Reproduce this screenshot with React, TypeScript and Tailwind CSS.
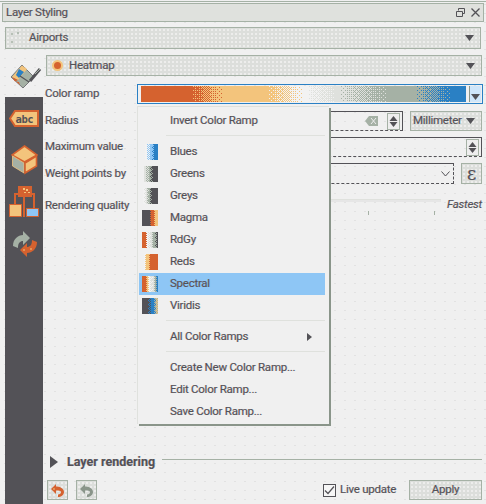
import type { ReactNode } from "react";

const font = "font-['Roboto','Noto_Sans',sans-serif]";
const combo =
  "flex items-center border border-[#a5b1a5] bg-[#dcdedb] bg-[radial-gradient(circle,#eeeeee_0.7px,transparent_0.8px)] bg-[length:4px_4px]";
const input = "border border-[#535257] [border-bottom-style:dashed]";

const ORANGE = "#d5622f";
const TAN = "#f3c47c";
const LIGHT = "#dfe1dd";
const WHITE = "#f2f2f2";
const SAGE = "#a5b1a5";
const BLUE = "#2a80c4";
const SKY = "#8ec6f5";
const DARK = "#535257";

type Stop = [number, string];

const BAYER = [
  [0, 8, 2, 10],
  [12, 4, 14, 6],
  [3, 11, 1, 9],
  [15, 7, 13, 5],
];

function pick(stops: Stop[], t: number, x: number, y: number) {
  for (let i = 0; i < stops.length - 1; i++) {
    const [p0, c0] = stops[i];
    const [p1, c1] = stops[i + 1];
    if (t <= p1) {
      const f = p1 === p0 ? 1 : (t - p0) / (p1 - p0);
      return f * 16 > BAYER[y % 4][x % 4] + 0.5 ? c1 : c0;
    }
  }
  return stops[stops.length - 1][1];
}

// ordered dither, same look as the 256 colour screenshot
function Ramp({ w, h, stops, className }: { w: number; h: number; stops: Stop[]; className?: string }) {
  const rects: ReactNode[] = [];
  for (let y = 0; y < h; y++) {
    let start = 0;
    let cur = pick(stops, 0, 0, y);
    for (let x = 1; x <= w; x++) {
      const c = x < w ? pick(stops, x / w, x, y) : "";
      if (c !== cur) {
        rects.push(<rect key={`${x}-${y}`} x={start} y={y} width={x - start} height={1} fill={cur} />);
        start = x;
        cur = c;
      }
    }
  }
  return (
    <svg width={w} height={h} shapeRendering="crispEdges" className={className}>
      {rects}
    </svg>
  );
}

const mainRamp: Stop[] = [
  [0, ORANGE],
  [0.15, ORANGE],
  [0.252, TAN],
  [0.382, TAN],
  [0.505, WHITE],
  [0.6, LIGHT],
  [0.76, SAGE],
  [0.837, SAGE],
  [0.96, BLUE],
  [1, BLUE],
];

const swatches: { name: string; stops: Stop[]; w: number }[] = [
  { name: "Blues", w: 13, stops: [[0, WHITE], [0.45, SKY], [0.7, BLUE], [1, BLUE]] },
  { name: "Greens", w: 14, stops: [[0, LIGHT], [0.4, SAGE], [0.6, DARK], [1, DARK]] },
  { name: "Greys", w: 15, stops: [[0, WHITE], [0.2, LIGHT], [0.4, SAGE], [0.55, DARK], [1, DARK]] },
  { name: "Magma", w: 16, stops: [[0, DARK], [0.45, DARK], [0.55, ORANGE], [0.68, ORANGE], [0.8, TAN], [1, TAN]] },
  { name: "RdGy", w: 16, stops: [[0, ORANGE], [0.2, ORANGE], [0.3, WHITE], [0.55, LIGHT], [0.75, SAGE], [0.95, DARK], [1, DARK]] },
  { name: "Reds", w: 14, stops: [[0, WHITE], [0.15, TAN], [0.3, TAN], [0.42, ORANGE], [1, ORANGE]] },
  { name: "Spectral", w: 16, stops: [[0, ORANGE], [0.2, ORANGE], [0.32, TAN], [0.45, WHITE], [0.65, LIGHT], [0.8, SAGE], [1, BLUE]] },
  { name: "Viridis", w: 16, stops: [[0, DARK], [0.35, DARK], [0.55, BLUE], [0.72, BLUE], [0.85, SAGE], [1, TAN]] },
];

function Caret({ className = "" }: { className?: string }) {
  return (
    <svg width="9" height="6" viewBox="0 0 9 6" className={className}>
      <path d="M0 0h9L4.5 6z" fill="#535257" />
    </svg>
  );
}

function Spin() {
  return (
    <div className="flex h-[17px] w-[13px] flex-col justify-between border border-[#a5b1a5] bg-[#eeeeee] py-[2px]">
      <svg width="11" height="5" viewBox="0 0 11 5"><path d="M5.5 0l4 5h-8z" fill="#535257" /></svg>
      <svg width="11" height="5" viewBox="0 0 11 5"><path d="M1.5 0h8l-4 5z" fill="#535257" /></svg>
    </div>
  );
}

function Label({ children }: { children: ReactNode }) {
  return <div className="w-[94px] shrink-0 whitespace-nowrap pl-[2px]">{children}</div>;
}

function BrushIcon() {
  return (
    <svg width="34" height="28" viewBox="0 0 34 28">
      <path d="M13 2L2 14l12 11 11-11z" fill="#a5b1a5" stroke="#535257" strokeWidth="0.7" />
      <path d="M13 2.500L3 14l6 3 9-11z" fill="#f3c47c" />
      <path d="M10 6l5 3-5 6-3-3z" fill="#2a80c4" />
      <path d="M3 14l6 3-3 1.500z" fill="#d5622f" />
      <path d="M7 18.500l3 .500 1 3z" fill="#d5622f" />
      <path d="M11 13l9 6" stroke="#535257" strokeWidth="1.200" />
      <path d="M21 18L31 6" stroke="#535257" strokeWidth="3" />
      <path d="M26 11l5-5" stroke="#a5b1a5" strokeWidth="1" />
    </svg>
  );
}

function AbcIcon() {
  return (
    <svg width="30" height="18" viewBox="0 0 30 18">
      <path d="M6 1h23v15H6L1 8.500z" fill="#f3c47c" stroke="#d5622f" strokeWidth="2" />
      <text x="6.500" y="13" fontFamily="'DejaVu Sans Mono', monospace" fontWeight="700" fontSize="10.500" letterSpacing="-0.4" fill="#535257" style={{ textShadow: "none" }}>abc</text>
    </svg>
  );
}

function CubeIcon() {
  return (
    <svg width="27" height="30" viewBox="0 0 27 30">
      <path d="M13.500 1L26 10 13.500 17 1 10z" fill="#f3c47c" stroke="#d5622f" strokeWidth="1.600" />
      <path d="M1.500 11l11.500 7v10L1.500 21z" fill="#a5b1a5" stroke="#f3c47c" strokeWidth="0.8" />
      <path d="M25.500 11L14 18v10l11.500-7z" fill="#f3c47c" stroke="#d5622f" strokeWidth="1.600" />
    </svg>
  );
}

function TreeIcon() {
  return (
    <svg width="31" height="33" viewBox="0 0 31 33">
      <path d="M9 0h14v11H9z" fill="#d5622f" />
      <path d="M14 2h2v2h-2zM17 3h2v2h-2zM15 6h2v2h-2zM19 6h2v2h-2zM12 7h2v2h-2z" fill="#f3c47c" />
      <path d="M5 7h21v2H5zM5 7h2v13H5zM24 7h2v15h-2zM14 11h2v20h-2z" fill="#d5622f" />
      <path d="M.5 18.500h12v12H.5z" fill="#f3c47c" stroke="#d5622f" />
      <path d="M17.500 22.500h12v8h-12z" fill="#8ec6f5" stroke="#d5622f" />
    </svg>
  );
}

function UndoPair() {
  return (
    <svg width="26" height="28" viewBox="0 0 26 28">
      <path d="M1 16C1 9 6 5 11 5V1l7 7-7 7v-4C8 11 6 13 6 18z" fill="#a5b1a5" />
      <path d="M25 12c0 7-5 11-10 11v4l-7-7 7-7v4c3 0 5-2 5-7z" fill="#d5622f" />
      <path d="M11 20h2M18 19h2" stroke="#f3c47c" />
    </svg>
  );
}

function SmallUndo({ grey }: { grey?: boolean }) {
  const fill = grey ? "#8a958a" : "#d5622f";
  return (
    <svg width="13" height="13" viewBox="0 0 13 13">
      <path d="M0 5l5-5v2.500c4 0 8 2 8 5.500 0 3-3 5-6 5v-2.500c2 0 3-1 3-2.500S8 6.500 5 6.500V10z" fill={fill} />
      {!grey && <path d="M2 5h2" stroke="#f3c47c" />}
    </svg>
  );
}

function Menu() {
  const item = "flex h-[22px] items-center pl-[32px]";
  const rule = "ml-[28px] mr-[4px] h-px bg-[#dfe1dd]";
  return (
    <div className="absolute left-[137px] top-[106px] flex h-[318px] w-[192px] flex-col border-l border-t border-[#dfe1dd] bg-[#f0f0f0] shadow-[2px_2px_0_#8a958a]">
      <div className={`${item} mt-[3px]`}>Invert Color Ramp</div>
      <div className={`${rule} mt-[3px] mb-[5px]`} />
      {swatches.map((s) => (
        <div
          key={s.name}
          className={`ml-[1px] mr-[4px] flex h-[22px] items-center ${s.name === "Spectral" ? "bg-[#8ec6f5]" : ""}`}
        >
          <div className="flex w-[19px] shrink-0 justify-end">
            <Ramp w={s.w} h={16} stops={s.stops} />
          </div>
          <span className="pl-[12px]">{s.name}</span>
        </div>
      ))}
      <div className={`${rule} mt-[3px]`} />
      <div className={`${item} mt-[5px] justify-between pr-[17px]`}>
        <span>All Color Ramps</span>
        <svg width="5" height="8" viewBox="0 0 5 8"><path d="M0 0l5 4-5 4z" fill="#535257" /></svg>
      </div>
      <div className={`${rule} mt-[3px] mb-[5px]`} />
      <div className={item}>Create New Color Ramp...</div>
      <div className={item}>Edit Color Ramp...</div>
      <div className={item}>Save Color Ramp...</div>
    </div>
  );
}

export default function App() {
  return (
    <div className={`relative flex h-[504px] w-[486px] flex-col overflow-hidden bg-[#f0f0f0] bg-[radial-gradient(circle,#e2e2e2_0.6px,transparent_0.7px)] bg-[length:10px_9px] pt-[1px] text-[11.5px] tracking-[-0.25px] text-[#535257] [text-shadow:-0.5px_0_0_rgba(213,98,47,0.3),0.5px_0_0_rgba(42,128,196,0.3)] ${font}`}>
      <div className="mb-[1px] h-px bg-[#a5b1a5]" />
      {/* Title */}
      <div className="mx-[2px] flex h-[19px] items-center justify-between border border-[#a5b1a5] bg-[#dfe1dd] pl-[3px] pr-[3px]">
        <span>Layer Styling</span>
        <div className="flex items-center gap-[6px]">
          <svg width="9" height="9" viewBox="0 0 9 9" fill="none" stroke="#535257"><path d="M2.500 2.500v-2h6v5h-2M.500 3.500h6v5h-6z" /></svg>
          <svg width="9" height="9" viewBox="0 0 9 9" fill="none" stroke="#535257" strokeWidth="1.300"><path d="M.5.5l8 8M8.500.5l-8 8" /></svg>
        </div>
      </div>
      {/* Layer combo */}
      <div className={`${combo} mx-[5px] mt-[5px] h-[22px] justify-between pl-[3px] pr-[6px]`}>
        <div className="flex items-center">
          <svg width="11" height="14" viewBox="0 0 11 14" fill="#a5b1a5">
            <circle cx="3" cy="3" r="1" /><circle cx="9" cy="2" r="1" /><circle cx="3" cy="11" r="1" />
          </svg>
          <span className="ml-[9px]">Airports</span>
        </div>
        <Caret />
      </div>

      <div className="mt-[6px] flex min-h-0 flex-1 pl-[5px]">
        {/* Tabs */}
        <div className="flex w-[38px] shrink-0 flex-col">
          <div className="flex h-[42px] justify-end pt-[8px]">
            <BrushIcon />
          </div>
          <div className="flex flex-1 flex-col items-center bg-[#535257] pt-[13px]">
            <AbcIcon />
            <div className="mt-[17px]"><CubeIcon /></div>
            <div className="mt-[11px]"><TreeIcon /></div>
            <div className="ml-[1px] mt-[11px]"><UndoPair /></div>
          </div>
        </div>

        {/* Panel */}
        <div className="flex min-w-0 flex-1 flex-col pr-[4px]">
          <div className={`${combo} ml-[3px] h-[21px] justify-between pl-[5px] pr-[6px]`}>
            <div className="flex items-center gap-[6px]">
              <svg width="11" height="11" viewBox="0 0 11 11">
                <circle cx="5.500" cy="5.500" r="5.500" fill="#f3c47c" />
                <circle cx="5.500" cy="5.500" r="3.500" fill="#d5622f" />
              </svg>
              <span>Heatmap</span>
            </div>
            <Caret />
          </div>

          <div className="mt-[8px] flex h-[19px] items-center">
            <Label>Color ramp</Label>
            <div className="flex h-[20px] flex-1 items-center border border-[#2a80c4] pl-[3px] pr-[1px]">
              <Ramp w={325} h={16} stops={mainRamp} />
              <div className="ml-[3px] h-[16px] w-px bg-[#8a958a]" />
              <div className="flex h-[16px] w-[11px] items-end justify-center bg-[#cfe6fa] pb-[2px]">
                <Caret />
              </div>
            </div>
          </div>

          <div className="mt-[8px] flex h-[20px] items-center">
            <Label>Radius</Label>
            <div className={`flex h-full w-[266px] items-center justify-end pr-[2px] ${input}`}>
              <svg width="13" height="10" viewBox="0 0 13 10" className="mr-[9px]">
                <path d="M4 0h9v10H4L0 5z" fill="#a5b1a5" />
                <path d="M6 2l5 6M11 2l-5 6" stroke="#eeeeee" />
              </svg>
              <Spin />
            </div>
            <div className={`${combo} ml-[7px] h-full flex-1 justify-between pl-[2px] pr-[6px]`}>
              <span>Millimeter</span>
              <Caret />
            </div>
          </div>

          <div className="mt-[6px] flex h-[20px] items-center">
            <Label>Maximum value</Label>
            <div className={`flex h-full flex-1 items-center justify-end pr-[2px] ${input}`}>
              <Spin />
            </div>
          </div>

          <div className="mt-[6px] flex h-[21px] items-center">
            <Label>Weight points by</Label>
            <div className={`flex h-full w-[317px] items-center justify-end pr-[3px] ${input} [border-right-style:dashed]`}>
              <svg width="9" height="6" viewBox="0 0 9 6" fill="none" stroke="#535257"><path d="M.5.5l4 4.500 4-4.500" /></svg>
            </div>
            <div className={`${combo} ml-[7px] h-full flex-1 justify-center font-['DejaVu_Serif',serif] text-[18px] leading-none`}>ε</div>
          </div>

          <div className="mt-[6px] flex h-[30px] items-start">
            <Label><span className="leading-[30px]">Rendering quality</span></Label>
            <div className="flex flex-1 flex-col pt-[9px]">
              <div className="mr-[42px] h-[3px] border-t border-[#dfe1dd] bg-[#e6e6e6]" />
              <div className="mr-[48px] mt-[9px] flex justify-end gap-[65px]">
                <div className="h-[4px] w-px bg-[#a5b1a5]" />
                <div className="h-[4px] w-px bg-[#a5b1a5]" />
              </div>
            </div>
            <span className="-ml-[36px] pt-[6px] italic">Fastest</span>
          </div>

          <div className="flex-1" />

          <div className="flex h-[20px] items-center pl-[7px]">
            <svg width="8" height="12" viewBox="0 0 8 12"><path d="M0 0l8 6-8 6z" fill="#535257" /></svg>
            <span className="ml-[9px] text-[12.5px] font-bold tracking-normal">Layer rendering</span>
            <div className="mb-[6px] ml-[7px] h-px flex-1 bg-[#a5b1a5]" />
          </div>

          <div className="mb-[4px] mt-[8px] flex h-[20px] items-center pl-[4px]">
            <div className={`${combo} h-full w-[21px] justify-center`}><SmallUndo /></div>
            <div className={`${combo} ml-[8px] h-full w-[21px] justify-center`}><SmallUndo grey /></div>
            <div className="flex-1" />
            <div className="flex h-[13px] w-[13px] items-center justify-center border border-[#535257] bg-[#f6f6f6]">
              <svg width="11" height="9" viewBox="0 0 11 9" fill="none" stroke="#535257" strokeWidth="1.200"><path d="M1 4.500l3 3 6-7" /></svg>
            </div>
            <span className="ml-[4px] w-[56px] whitespace-nowrap">Live update</span>
            <div className={`${combo} ml-[13px] h-full w-[73px] justify-center`}>Apply</div>
          </div>
        </div>
      </div>

      <Menu />
    </div>
  );
}
